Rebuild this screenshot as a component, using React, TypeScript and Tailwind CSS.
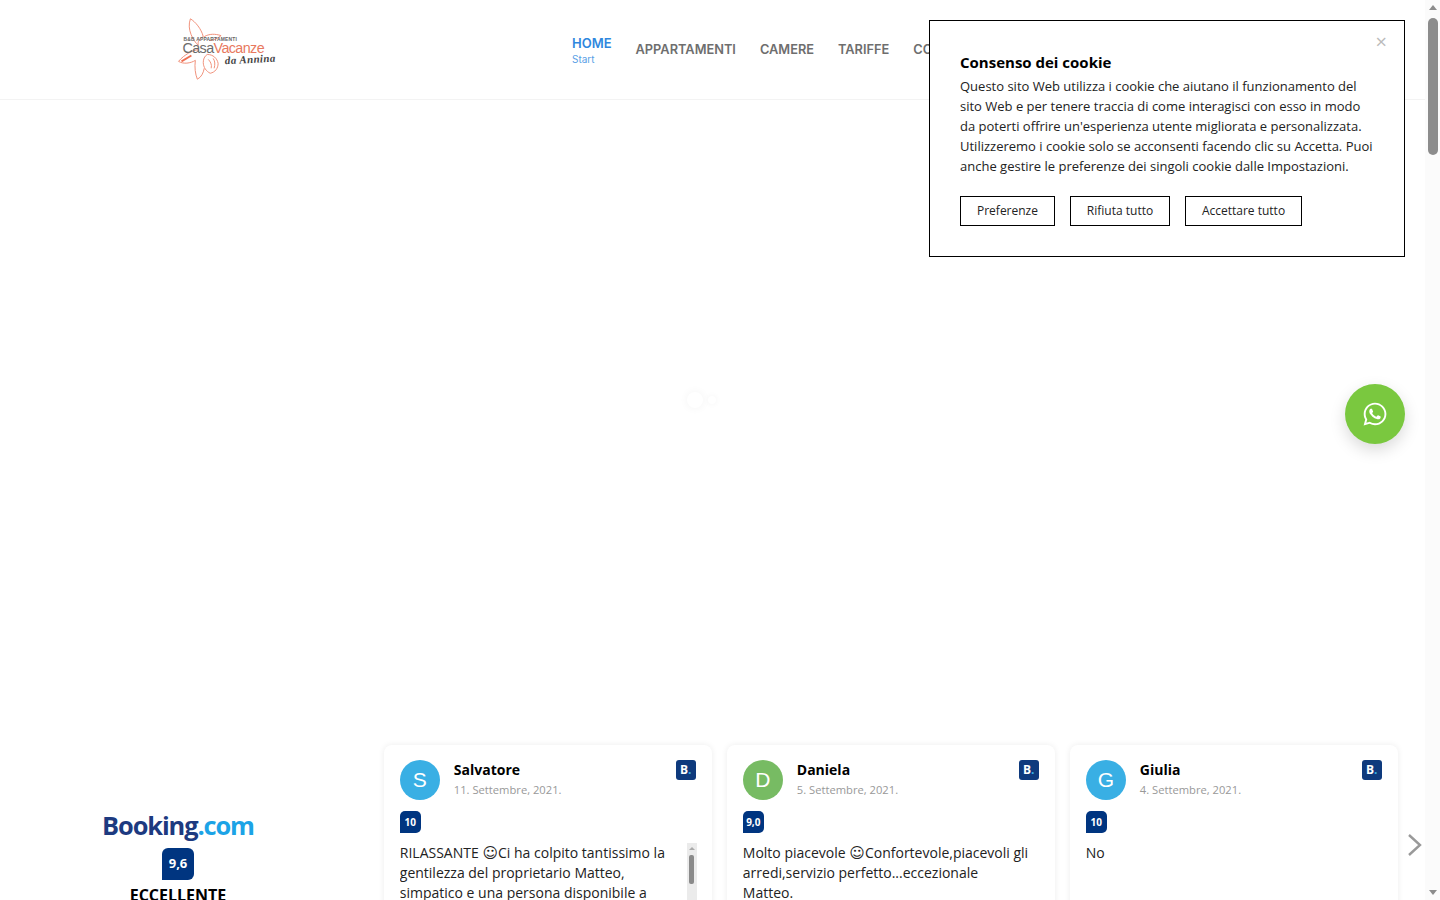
import { FaWhatsapp } from "react-icons/fa";

const menu = ["APPARTAMENTI", "CAMERE", "TARIFFE", "CONTATTI", "DOVE SIAMO", "GALLERY"];

const cookieButtons = [
  { label: "Preferenze", width: "w-[95px]" },
  { label: "Rifiuta tutto", width: "w-[100px]" },
  { label: "Accettare tutto", width: "w-[117px]" },
];

const reviews = [
  {
    name: "Salvatore",
    initial: "S",
    color: "bg-[#39afe4]",
    date: "11. Settembre, 2021.",
    score: "10",
    before: "RILASSANTE ",
    after:
      "Ci ha colpito tantissimo la gentilezza del proprietario Matteo, simpatico e una persona disponibile a soddisfare ogni richiesta. La camera era pulita e confortevole, la posizione tranquilla e vicina a tutto.",
    scroll: true,
  },
  {
    name: "Daniela",
    initial: "D",
    color: "bg-[#77bb63]",
    date: "5. Settembre, 2021.",
    score: "9,0",
    before: "Molto piacevole ",
    after: "Confortevole,piacevoli gli arredi,servizio perfetto...eccezionale Matteo.",
    scroll: false,
  },
  {
    name: "Giulia",
    initial: "G",
    color: "bg-[#39afe4]",
    date: "4. Settembre, 2021.",
    score: "10",
    before: "No",
    after: "",
    scroll: false,
  },
];

function Logo() {
  return (
    <svg width="140" height="99" viewBox="0 0 140 100" className="shrink-0">
      <g fill="none" stroke="#f0917a" strokeWidth="1">
        <path d="M30 19c5 3 11 10 13 18-4 2-6 5-5 9-5-5-12-16-8-27z" />
        <path d="M44 37c5-3 11-3 17-1-4 3-8 5-12 5" />
        <path d="M38 50c-6 1-14 5-20 12 5 3 12 2 17-1" />
        <path d="M35 61c-1 7 0 14 2 19 4-2 6-6 7-11" />
        <path d="M47 55c6 0 10 4 11 9 0 5-3 9-8 10-4-2-7-6-7-11 0-3 1-6 4-8z" />
        <path d="M48 60c2 2 4 5 3 9M53 59c2 3 2 6 1 10" />
      </g>
      <path d="M21 62l10-6" stroke="#ee6f52" strokeWidth="1.8" />
      <text x="23" y="41" fontSize="5" fontWeight="700" fontFamily="Liberation Sans, sans-serif" fill="#666" textLength="54">
        B&amp;B APPARTAMENTI
      </text>
      <text x="22" y="54" fontSize="14.5" fontFamily="Liberation Sans, sans-serif" fill="#6b6b6b" textLength="83">
        Casa<tspan fill="#e8795f">Vacanze</tspan>
      </text>
      <text
        x="65"
        y="65"
        fontSize="11"
        fontWeight="700"
        fontStyle="italic"
        fontFamily="Liberation Serif, serif"
        fill="#444"
        textLength="51"
        transform="rotate(-3 65 65)"
      >
        da Annina
      </text>
    </svg>
  );
}

function ScoreBadge({ score }: { score: string }) {
  return (
    <div className="flex h-[22px] w-[21px] items-center justify-center rounded-t-[5px] rounded-br-[5px] bg-[#003580] text-[10px] font-bold text-white">
      {score}
    </div>
  );
}

function ReviewCard({ review }: { review: (typeof reviews)[number] }) {
  return (
    <div className="h-[260px] w-[328px] shrink-0 rounded-[8px] px-[16px] pt-[15px] shadow-[0_0_6px_rgba(0,0,0,0.08)]">
      <div className="flex items-start">
        <div
          className={`flex h-[40px] w-[40px] items-center justify-center rounded-full text-[21px] text-white [font-family:'Liberation_Sans',sans-serif] ${review.color}`}
        >
          {review.initial}
        </div>
        <div className="ml-[14px] flex-1">
          <div className="text-[14px] leading-[20px] font-bold text-black">{review.name}</div>
          <div className="mt-[1px] text-[11.2px] leading-[18px] text-[#999]">{review.date}</div>
        </div>
        <div className="flex h-[20px] w-[20px] items-center justify-center rounded-[3px] bg-[#0e3a7d] text-[12px] font-bold text-white">
          B<span className="text-[#39afe4]">.</span>
        </div>
      </div>
      <div className="mt-[11px]">
        <ScoreBadge score={review.score} />
      </div>
      <div className="relative mt-[10px] h-[120px] w-[297px]">
        <div className="h-full overflow-hidden pr-[10px] text-[14px] leading-[20px] text-[#222]">
          {review.before}
          {review.after && <span className="[font-family:'DejaVu_Sans',sans-serif] text-[15px] leading-[15px]">☺</span>}
          {review.after}
        </div>
        {review.scroll && (
          <div className="absolute top-0 right-0 h-full w-[10px] bg-[#ebebeb]">
            <div className="mx-auto mt-[4px] h-0 w-0 border-x-[3px] border-b-[3px] border-x-transparent border-b-[#aaa]" />
            <div className="mx-auto mt-[5px] h-[29px] w-[5px] rounded-[2px] bg-[#8a8a8a]" />
          </div>
        )}
      </div>
    </div>
  );
}

export default function App() {
  return (
    <div className="h-[900px] overflow-hidden bg-white [font-family:'Open_Sans',sans-serif]">
      <header className="flex h-[100px] items-center overflow-hidden border-b border-[#f3f3f3] pl-[160px]">
        <Logo />
        <nav className="ml-[272px] flex shrink-0 items-center gap-[24px] text-[12.8px] font-semibold whitespace-nowrap text-[#6e6e6e] [font-family:Inter,sans-serif]">
          <div className="pt-[2px]">
            <div className="text-[13px] leading-[16px] font-semibold text-[#2f87de]">HOME</div>
            <div className="mt-[1px] text-[10px] leading-[14px] font-normal text-[#5a9fe6]">Start</div>
          </div>
          {menu.map((item) => (
            <div key={item}>{item}</div>
          ))}
        </nav>
      </header>

      <main className="flex h-[645px] items-start gap-[5px] pt-[292px] pl-[687px]">
        <div className="h-[16px] w-[16px] rounded-full bg-white shadow-[0_0_10px_rgba(0,0,0,0.05)]" />
        <div className="mt-[4px] h-[8px] w-[8px] rounded-full bg-white shadow-[0_0_6px_rgba(0,0,0,0.05)]" />
      </main>

      <section className="flex items-start">
        <div className="flex w-[356px] shrink-0 flex-col items-center pt-[62px]">
          <div className="text-[25.4px] leading-[36px] font-bold tracking-[-1.1px] text-[#1d3a80]">
            Booking<span className="text-[#1ca3e6]">.com</span>
          </div>
          <div className="mt-[5px] flex h-[32px] w-[32px] items-center justify-center rounded-t-[6px] rounded-br-[6px] bg-[#003580] text-[13px] font-bold text-white">
            9,6
          </div>
          <div className="mt-[5px] text-[16px] leading-[20px] font-bold text-black">ECCELLENTE</div>
        </div>
        <div className="ml-[27.8px] flex gap-[15px]">
          {reviews.map((review) => (
            <ReviewCard key={review.name} review={review} />
          ))}
        </div>
        <svg width="16" height="24" viewBox="0 0 16 24" className="mt-[88px] ml-[9px]" fill="none" stroke="#999" strokeWidth="2.4">
          <path d="M2 2l11 10L2 22" />
        </svg>
      </section>

      <div className="fixed top-[20px] right-[35px] h-[237px] w-[476px] border border-black bg-white px-[30px] pt-[30px]">
        <div className="absolute top-[11px] right-[17px] text-[20px] leading-[20px] text-[#bbb]">×</div>
        <div className="text-[15px] leading-[22px] font-bold text-black">Consenso dei cookie</div>
        <p className="mt-[3px] text-[13px] leading-[20px] text-[#222]">
          Questo sito Web utilizza i cookie che aiutano il funzionamento del sito Web e per tenere traccia di come
          interagisci con esso in modo da poterti offrire un'esperienza utente migliorata e personalizzata. Utilizzeremo
          i cookie solo se acconsenti facendo clic su Accetta. Puoi anche gestire le preferenze dei singoli cookie dalle
          Impostazioni.
        </p>
        <div className="mt-[20px] flex gap-[15px]">
          {cookieButtons.map((button) => (
            <button key={button.label} className={`h-[30px] border border-black text-[12px] text-[#222] ${button.width}`}>
              {button.label}
            </button>
          ))}
        </div>
      </div>

      <div className="fixed top-[384px] right-[35px] flex h-[60px] w-[60px] items-center justify-center rounded-full bg-[#7ac83f] shadow-[0_6px_16px_rgba(0,0,0,0.15)]">
        <FaWhatsapp className="text-[26px] text-white" />
      </div>

      {/* page scrollbar, the browser doesn't paint one here */}
      <div className="fixed top-0 right-0 flex h-[900px] w-[15px] flex-col items-center justify-between bg-[#fbfbfb] py-[5px]">
        <div className="absolute top-[5px] h-0 w-0 border-x-[4.5px] border-b-[5px] border-x-transparent border-b-[#8c8c8c]" />
        <div className="absolute top-[18px] h-[137px] w-[10px] rounded-[5px] bg-[#8c8c8c]" />
        <div className="absolute bottom-[5px] h-0 w-0 border-x-[4.5px] border-t-[5px] border-x-transparent border-t-[#8c8c8c]" />
      </div>
    </div>
  );
}
